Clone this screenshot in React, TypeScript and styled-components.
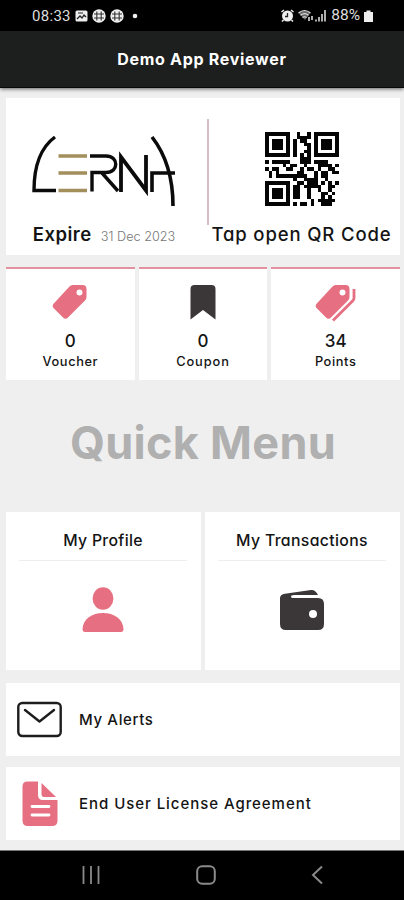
import React from "react";
import styled, { createGlobalStyle } from "styled-components";

const PINK = "#e66f81";
const INK = "#3b3638";

const GlobalStyle = createGlobalStyle`
  * { box-sizing: border-box; }
  body {
    margin: 0;
    background: #efefef;
    font-family: Inter, "Open Sans", sans-serif;
    font-feature-settings: "cv11", "calt" 0;
    color: #111;
  }
  svg { display: block; flex: none; }
`;

const Screen = styled.div`
  width: 404px;
  height: 900px;
  display: flex;
  flex-direction: column;
  overflow: hidden;
  background: #efefef;
`;

const Text = styled.span<{ $size: number; $weight?: number; $spacing?: number; $color?: string }>`
  font-size: ${(p) => p.$size}px;
  font-weight: ${(p) => p.$weight ?? 500};
  letter-spacing: ${(p) => p.$spacing ?? 0}px;
  color: ${(p) => p.$color ?? "#141414"};
  line-height: 1.2;
  white-space: nowrap;
`;

const StatusBar = styled.header`
  height: 31px;
  flex: none;
  background: #000;
  display: flex;
  justify-content: space-between;
  align-items: center;
  padding: 0 31px 0 32px;
`;

const StatusGroup = styled.div<{ $gap: number }>`
  display: flex;
  align-items: center;
  gap: ${(p) => p.$gap}px;
`;

const StatusText = styled(Text)`
  font-family: Roboto, sans-serif;
`;

const AppBar = styled.div`
  height: 57px;
  flex: none;
  display: flex;
  align-items: center;
  justify-content: center;
  padding-top: 2px;
  background: #1d1f1e;
  border-bottom: 1px solid #080808;
  box-shadow: 0 1px 4px rgba(0, 0, 0, 0.6);
`;

const Content = styled.main`
  flex: 1;
  padding: 10px 4px 0 6px;
  display: flex;
  flex-direction: column;
`;

const MemberCard = styled.section`
  height: 157px;
  display: flex;
  background: #fff;
`;

const CardHalf = styled.div<{ $width: number; $top: number }>`
  width: ${(p) => p.$width}px;
  padding-top: ${(p) => p.$top}px;
  display: flex;
  flex-direction: column;
  align-items: center;
`;

const LogoSlot = styled.div`
  margin-right: 6px;
`;

const Divider = styled.div`
  width: 2px;
  height: 106px;
  margin-top: 21px;
  background: #d9bcc2;
`;

const ExpireLine = styled.div`
  display: flex;
  align-items: baseline;
  gap: 9px;
  margin-top: 14px;
  margin-right: 5px;
`;

const QrCaption = styled.div`
  margin-top: 17px;
  margin-right: 1px;
  display: flex;
`;

const Stats = styled.section`
  margin-top: 12px;
  display: grid;
  grid-template-columns: repeat(3, 1fr);
  gap: 4px;
`;

const StatCard = styled.div`
  height: 113px;
  background: #fff;
  border-top: 2px solid #e3919e;
  display: flex;
  flex-direction: column;
  align-items: center;
  padding-top: 15px;
`;

const StatIcon = styled.div`
  height: 36px;
`;

const StatValue = styled.div`
  margin-top: 11px;
  height: 23px;
`;

const MenuTitle = styled.h1`
  margin: 0;
  height: 132px;
  display: flex;
  justify-content: center;
  align-items: center;
  padding-bottom: 7px;
`;

const Tiles = styled.section`
  display: grid;
  grid-template-columns: 1fr 1fr;
  gap: 4px;
`;

const Tile = styled.div`
  height: 158px;
  background: #fff;
  display: flex;
  flex-direction: column;
  align-items: center;
  padding: 0 14px 0 13px;
`;

const TileHead = styled.div`
  width: 100%;
  height: 49px;
  padding-top: 20px;
  display: flex;
  justify-content: center;
  border-bottom: 1px solid #eeeeee;
`;

const TileIcon = styled.div`
  height: 98px;
  display: flex;
  align-items: center;
`;

const ListRow = styled.div<{ $top: number }>`
  height: 73px;
  margin-top: ${(p) => p.$top}px;
  padding: 0 12px 0 11px;
  background: #fff;
  display: flex;
  align-items: center;
`;

const RowIcon = styled.div<{ $inset?: number }>`
  width: 62px;
  padding-left: ${(p) => p.$inset ?? 0}px;
  display: flex;
`;

const NavBar = styled.footer`
  height: 50px;
  flex: none;
  background: #000;
  border-top: 1px solid #777;
  display: flex;
  align-items: center;
  justify-content: space-between;
  padding: 0 81px 2px 82px;
`;

const GlobeIcon = () => (
  <svg width="14" height="14" viewBox="0 0 14 14">
    <circle cx="7" cy="7" r="6.7" fill="#eee" />
    <path d="M4.800 2.500v9M9.200 2.500v9M2 5h10M2 9h10" stroke="#333" strokeWidth="1.100" />
  </svg>
);

const Logo = () => (
  <svg width="146" height="74" viewBox="0 0 146 74" fill="none" stroke="#0b0b0b" strokeWidth="3.400">
    <path d="M24 2C9 13 3 32 3 55.500H25" />
    <path d="M27.500 21H56M27.500 38H56M27.500 55.500H56" stroke="#a38f5c" />
    <path d="M59 21H75c13 0 13 16.500 0 16.500H61v19M71 38L87 56" />
    <path d="M90 57V22L115 55.500V20" strokeWidth="3.800" />
    <path d="M121 57V38H144M121 2C135 20 142 43 142 71" strokeWidth="3.600" />
  </svg>
);

const QR_ROWS = [
  "111111100100101111111",
  "100000100111101000001",
  "101110101011001011101",
  "101110101001101011101",
  "101110101000101011101",
  "100000101001101000001",
  "111111101010101111111",
  "000000000011100000000",
  "101111100011101111000",
  "000001011001000111101",
  "101100110010110100110",
  "010100000110001011011",
  "010111111111001011000",
  "000000001001111001000",
  "111111100110111010101",
  "100000101101111100110",
  "101110101100100100100",
  "101110101100100011010",
  "101110101100100010100",
  "100000100000010111110",
  "111111101011010011100",
];

const QrCode = () => (
  <svg width="74" height="74" viewBox="0 0 21 21" shapeRendering="crispEdges">
    {QR_ROWS.flatMap((row, y) =>
      [...row].map((c, x) =>
        c === "1" ? <rect key={`${x}-${y}`} x={x} y={y} width="1" height="1" fill="#050505" /> : null
      )
    )}
  </svg>
);

const TAG_PATH =
  "M20.500 1H30.500Q34.500 1 34.500 5V13Q34.500 15 33 16.500L16 33.500Q13.500 36 11 33.500L1.800 24.300Q-.5 22 1.800 19.500L17.500 2.500Q19 1 20.500 1ZM27.500 5.500a3 3 0 1 0 0 6a3 3 0 1 0 0-6Z";

const TagIcon = () => (
  <svg width="36" height="36" viewBox="0 0 36 36">
    <path d={TAG_PATH} fill={PINK} fillRule="evenodd" />
  </svg>
);

const TagsIcon = () => (
  <svg width="42" height="38" viewBox="0 0 42 38">
    <path d={TAG_PATH} fill={PINK} fillRule="evenodd" />
    <path d="M39 5V14Q39 15.500 37.800 16.700L18 36.500" fill="none" stroke={PINK} strokeWidth="2.800" />
  </svg>
);

const BookmarkIcon = () => (
  <svg width="26" height="36" viewBox="0 0 26 36">
    <path d="M.5 35.500V5Q.5 1 4.500 1H21.500Q25.500 1 25.500 5V35.500L13 26Z" fill={INK} />
  </svg>
);

const PersonIcon = () => (
  <svg width="42" height="46" viewBox="0 0 42 46">
    <ellipse cx="21" cy="11.500" rx="10.400" ry="11.200" fill={PINK} />
    <path d="M3 45Q.5 45 .5 42C1 32 10 26 21 26S41 32 41.500 42Q41.500 45 39 45Z" fill={PINK} />
  </svg>
);

const WalletIcon = () => (
  <svg width="46" height="42" viewBox="0 0 46 42">
    <path d="M1 9Q1 5.500 6 4.800L32 1Q36 .3 39 6H15Q12 6 12 7.500T15 9H39Q45 9 45 15V35Q45 41 39 41H7Q1 41 1 35Z" fill={INK} />
    <circle cx="34" cy="25" r="4" fill="#fff" />
  </svg>
);

const MailIcon = () => (
  <svg width="45" height="37" viewBox="0 0 45 37" fill="none" stroke="#1d1d1d" strokeWidth="2.400" strokeLinecap="round" strokeLinejoin="round">
    <rect x="1.300" y="2" width="42.400" height="33" rx="4" />
    <path d="M8 9L22.500 20.500L37 9" />
  </svg>
);

const DocumentIcon = () => (
  <svg width="36" height="46" viewBox="0 0 36 46">
    <path d="M5.500 .5H16V14Q16 19 21 19H35.500V39.500Q35.500 45 30 45H6Q.5 45 .5 39.500V5.500Q.5 .5 5.500 .5Z" fill={PINK} />
    <path d="M19.500 2L34 16H22Q19.500 16 19.500 13Z" fill={PINK} />
    <path d="M10 25.500H27M10 34H27" stroke="#fff" strokeWidth="2.800" strokeLinecap="round" />
  </svg>
);

export default function App() {
  return (
    <>
      <GlobalStyle />
      <Screen>
        <StatusBar>
          <StatusGroup $gap={4}>
            <StatusText $size={15} $weight={400} $spacing={0.3} $color="#ddd">08:33</StatusText>
            <svg width="13" height="12" viewBox="0 0 13 12">
              <rect x=".5" y=".5" width="12" height="11" rx="1.500" fill="#eee" />
              <path d="M2 9L5 6L7 8L9 5L11 7" fill="none" stroke="#222" strokeWidth="1.300" />
              <path d="M3 3h5" stroke="#222" />
            </svg>
            <GlobeIcon />
            <GlobeIcon />
            <svg width="14" height="6" viewBox="0 0 14 6">
              <circle cx="7" cy="3" r="2.300" fill="#eee" />
            </svg>
          </StatusGroup>
          <StatusGroup $gap={4}>
            <svg width="13" height="13" viewBox="0 0 13 13">
              <circle cx="6.500" cy="7" r="5.500" fill="#eee" />
              <path d="M.5 3L3 1M12.500 3L10 1M2.500 11L1 12.500M10.500 11L12 12.500" stroke="#eee" strokeWidth="1.500" />
              <path d="M6.500 4V7.500H4" fill="none" stroke="#222" strokeWidth="1.300" />
            </svg>
            <svg width="29" height="13" viewBox="0 0 29 13">
              <path d="M.5 4Q6.500-1 12.500 4L7 11Z" fill="#666" />
              <path d="M.5 4Q6.500-1 12.500 4M2.500 6.300Q6.500 3 10.500 6.300M4.500 8.500Q6.500 7 8.500 8.500" fill="none" stroke="#ddd" strokeWidth="1.200" />
              <path d="M11 8v4M14 7v4M18 10.500v2M21 8v4.500M24 5v7.500M27 1v11.500" stroke="#ccc" strokeWidth="1.700" />
            </svg>
            <StatusText $size={15.5} $weight={400} $color="#ddd">88%</StatusText>
            <svg width="9" height="12" viewBox="0 0 9 12">
              <path d="M0 2H2.500V.5H6.500V2H9V12H0Z" fill="#eee" />
            </svg>
          </StatusGroup>
        </StatusBar>

        <AppBar>
          <Text $size={16} $weight={700} $spacing={0.7} $color="#fff">Demo App Reviewer</Text>
        </AppBar>

        <Content>
          <MemberCard>
            <CardHalf $width={201} $top={37}>
              <LogoSlot>
                <Logo />
              </LogoSlot>
              <ExpireLine>
                <Text $size={18.5} $weight={600} $spacing={0.5}>Expire</Text>
                <Text $size={12.7} $weight={300} $color="#777">31 Dec 2023</Text>
              </ExpireLine>
            </CardHalf>
            <Divider />
            <CardHalf $width={186} $top={34}>
              <QrCode />
              <QrCaption>
                <Text $size={18.5} $spacing={0.87}>Tap open QR Code</Text>
              </QrCaption>
            </CardHalf>
          </MemberCard>

          <Stats>
            <StatCard>
              <StatIcon><TagIcon /></StatIcon>
              <StatValue><Text $size={17}>0</Text></StatValue>
              <Text $size={12.8} $spacing={0.6}>Voucher</Text>
            </StatCard>
            <StatCard>
              <StatIcon><BookmarkIcon /></StatIcon>
              <StatValue><Text $size={17}>0</Text></StatValue>
              <Text $size={12.8} $spacing={0.9}>Coupon</Text>
            </StatCard>
            <StatCard>
              <StatIcon><TagsIcon /></StatIcon>
              <StatValue><Text $size={17}>34</Text></StatValue>
              <Text $size={12.8} $spacing={0.6}>Points</Text>
            </StatCard>
          </Stats>

          <MenuTitle>
            <Text $size={45} $weight={700} $spacing={0.3} $color="#b0b0b0">Quick Menu</Text>
          </MenuTitle>

          <Tiles>
            <Tile>
              <TileHead><Text $size={15.8} $spacing={0.3}>My Profile</Text></TileHead>
              <TileIcon><PersonIcon /></TileIcon>
            </Tile>
            <Tile>
              <TileHead><Text $size={15.8} $spacing={0.35}>My Transactions</Text></TileHead>
              <TileIcon><WalletIcon /></TileIcon>
            </Tile>
          </Tiles>

          <ListRow $top={13}>
            <RowIcon><MailIcon /></RowIcon>
            <Text $size={15} $spacing={0.65}>My Alerts</Text>
          </ListRow>
          <ListRow $top={11}>
            <RowIcon $inset={5}><DocumentIcon /></RowIcon>
            <Text $size={15} $spacing={0.95}>End User License Agreement</Text>
          </ListRow>
        </Content>

        <NavBar>
          <svg width="18" height="20" viewBox="0 0 18 20">
            <path d="M1.500 1V19M9 1V19M16.500 1V19" stroke="#8a8a8a" strokeWidth="1.800" />
          </svg>
          <svg width="20" height="20" viewBox="0 0 20 20">
            <rect x="1.200" y="1.200" width="17.600" height="17.600" rx="5" fill="none" stroke="#8a8a8a" strokeWidth="2" />
          </svg>
          <svg width="12" height="20" viewBox="0 0 12 20">
            <path d="M11 1.500L2 10L11 18.500" fill="none" stroke="#8a8a8a" strokeWidth="2" />
          </svg>
        </NavBar>
      </Screen>
    </>
  );
}
